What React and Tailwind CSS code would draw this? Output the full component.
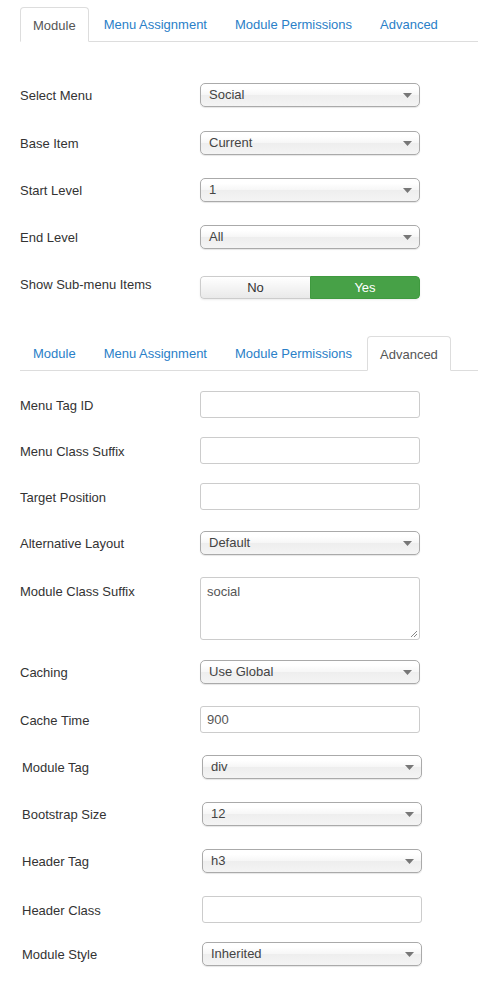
import React from "react";

const font = { fontFamily: '"Liberation Sans", Arial, sans-serif' };

const tabs = ["Module", "Menu Assignment", "Module Permissions", "Advanced"];

function Tabs({ active }) {
  return (
    <div className="flex border-b border-[#dddddd] h-[35px]">
      {tabs.map((t) => (
        <div
          key={t}
          className={
            t === active
              ? "mr-[2px] -mb-px flex items-center rounded-t-[4px] border border-[#dddddd] border-b-white bg-white px-[12px] pt-[2px] text-[#555555]"
              : "mr-[2px] flex items-center px-[13px] pt-[2px] text-[#2a80c8]"
          }
        >
          {t}
        </div>
      ))}
    </div>
  );
}

function Select({ value }) {
  return (
    <div className="flex h-[24px] w-[220px] items-center justify-between rounded-[5px] border border-[#aaaaaa] bg-[linear-gradient(#ffffff_20%,#f6f6f6_50%,#eeeeee_52%,#f4f4f4_100%)] pl-[8px] pr-[7px] text-[#444444] shadow-[0_1px_1px_rgba(0,0,0,0.1)]">
      <span>{value}</span>
      <svg width="9" height="5" viewBox="0 0 9 5">
        <path d="M0 0 L9 0 L4.5 5 Z" fill="#777777" />
      </svg>
    </div>
  );
}

function Input({ value }) {
  return (
    <div className="flex h-[27px] w-[220px] items-center rounded-[3px] border border-[#cccccc] bg-white px-[6px] text-[#555555]">
      {value}
    </div>
  );
}

function Textarea({ value }) {
  return (
    <div className="relative h-[63px] w-[220px] rounded-[3px] border border-[#cccccc] bg-white px-[6px] pt-[6px] text-[#555555]">
      {value}
      <svg className="absolute bottom-[1px] right-[1px]" width="8" height="8" viewBox="0 0 8 8">
        <path d="M7 1 L1 7 M7 4 L4 7" stroke="#888888" strokeWidth="1" />
      </svg>
    </div>
  );
}

function Row({ label, mt, children, shift, top }) {
  return (
    <div className={`flex ${top ? "items-start" : "items-center"} ${mt} ${shift ? "pl-[2px]" : ""}`}>
      <div className={`w-[180px] text-[#333333] ${top ? "pt-[7px]" : "pt-[2px]"}`}>{label}</div>
      {children}
    </div>
  );
}

export default function App() {
  return (
    <div className="min-h-[991px] w-[478px] bg-white pl-[20px] text-[13px] leading-[16px]" style={font}>
      <div className="pt-[7px]">
        <Tabs active="Module" />
      </div>

      <Row label="Select Menu" mt="mt-[41px]">
        <Select value="Social" />
      </Row>
      <Row label="Base Item" mt="mt-[24px]">
        <Select value="Current" />
      </Row>
      <Row label="Start Level" mt="mt-[23px]">
        <Select value="1" />
      </Row>
      <Row label="End Level" mt="mt-[23px]">
        <Select value="All" />
      </Row>
      <div className="mt-[27px] flex items-center">
        <div className="w-[180px] -mt-[5px] text-[#333333]">Show Sub-menu Items</div>
        <div className="flex h-[23px] w-[220px] overflow-hidden rounded-[4px] shadow-[0_1px_2px_rgba(0,0,0,0.08)]">
          <div className="flex w-[110px] items-center justify-center rounded-l-[4px] border border-r-0 border-[#cccccc] bg-[linear-gradient(#ffffff,#e9e9e9)] text-[#333333]">
            No
          </div>
          <div className="flex flex-1 items-center justify-center rounded-r-[4px] border border-[#3f9a3f] bg-[#47a147] text-white">
            Yes
          </div>
        </div>
      </div>

      <div className="mt-[37px]">
        <Tabs active="Advanced" />
      </div>

      <Row label="Menu Tag ID" mt="mt-[20px]">
        <Input />
      </Row>
      <Row label="Menu Class Suffix" mt="mt-[19px]">
        <Input />
      </Row>
      <Row label="Target Position" mt="mt-[19px]">
        <Input />
      </Row>
      <Row label="Alternative Layout" mt="mt-[21px]">
        <Select value="Default" />
      </Row>
      <Row label="Module Class Suffix" mt="mt-[22px]" top>
        <Textarea value="social" />
      </Row>
      <Row label="Caching" mt="mt-[20px]">
        <Select value="Use Global" />
      </Row>
      <Row label="Cache Time" mt="mt-[22px]">
        <Input value="900" />
      </Row>
      <Row label="Module Tag" mt="mt-[22px]" shift>
        <Select value="div" />
      </Row>
      <Row label="Bootstrap Size" mt="mt-[23px]" shift>
        <Select value="12" />
      </Row>
      <Row label="Header Tag" mt="mt-[23px]" shift>
        <Select value="h3" />
      </Row>
      <Row label="Header Class" mt="mt-[23px]" shift>
        <Input />
      </Row>
      <Row label="Module Style" mt="mt-[19px]" shift>
        <Select value="Inherited" />
      </Row>
    </div>
  );
}
